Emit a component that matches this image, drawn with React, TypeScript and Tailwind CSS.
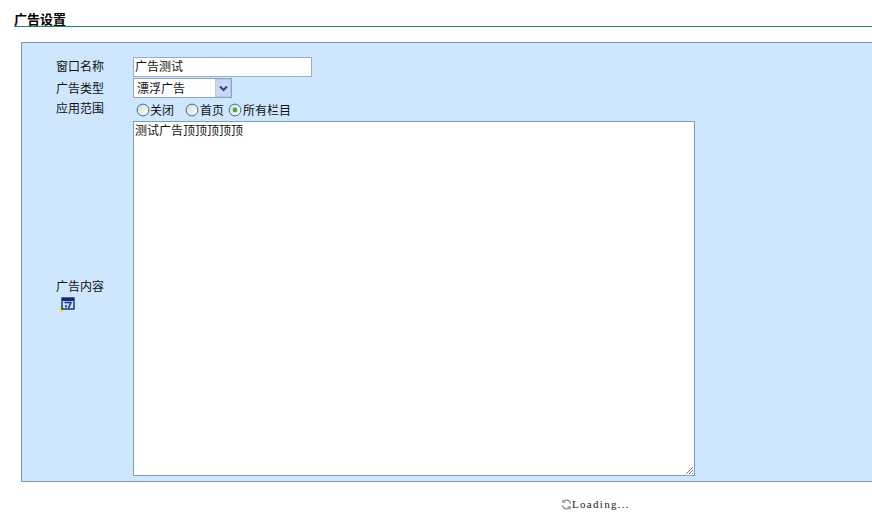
const cjk = "font-['Noto_Sans_CJK_SC','Liberation_Sans',sans-serif]";

function Radio({ checked }: { checked?: boolean }) {
  return (
    <svg width="14" height="14" viewBox="0 0 14 14" className="shrink-0">
      <defs>
        <linearGradient id="radioFill" x1="0" y1="0" x2="1" y2="1">
          <stop offset="0" stopColor="#d8d8d0" />
          <stop offset="1" stopColor="#ffffff" />
        </linearGradient>
      </defs>
      <circle cx="7" cy="7" r="5.9" fill="url(#radioFill)" stroke="#3f6f94" strokeWidth="1" />
      {checked && <circle cx="7" cy="7" r="2.4" fill="#3fae49" />}
    </svg>
  );
}

function Row({ label, children, labelClass }: { label: string; children: React.ReactNode; labelClass?: string }) {
  return (
    <div className="flex items-center">
      <div className={`w-[111px] pl-[34px] shrink-0 text-[12px] leading-[16px] text-[#111] ${labelClass ?? ""}`}>{label}</div>
      {children}
    </div>
  );
}

function FormIcon() {
  return (
    <svg width="18" height="16" viewBox="0 0 18 16">
      <path d="M0 12 L3 8 L6 11 L4 15 L1 15 Z" fill="#f2dc5e" />
      <rect x="3" y="1" width="12" height="11" fill="#cfe0f5" stroke="#14287c" strokeWidth="1.4" />
      <rect x="3" y="1" width="12" height="3" fill="#14287c" />
      <path d="M5.5 5.5 H12.5 M12 5.5 L9.5 11 M7 8 L7 10.5" stroke="#14287c" strokeWidth="1.5" fill="none" />
    </svg>
  );
}

export default function App() {
  return (
    <div className={`w-[872px] h-[523px] overflow-hidden bg-white ${cjk}`}>
      <div className="ml-[14px] mt-[11px] h-[16px] border-b border-[#2f7d6b]">
        <h1 className="text-[13px] leading-[15px] font-bold text-black">广告设置</h1>
      </div>

      <div className="ml-[21px] mt-[15px] w-[870px] h-[440px] bg-[#cfe7fe] border border-[#8096ad] pt-[14px]">
        <Row label="窗口名称" labelClass="pb-[2px]">
          <div className="w-[179px] h-[20px] bg-white border border-[#9aaebf] pl-[1px] text-[12px] leading-[16px] text-[#111]">
            广告测试
          </div>
        </Row>
        <div className="mt-[1px]">
          <Row label="广告类型">
            <div className="w-[99px] h-[20px] bg-white border border-[#8ea5bb] flex items-center justify-between text-[12px] text-[#111] pl-[3px]">
              <span className="leading-[18px]">漂浮广告</span>
              <div className="w-[16px] h-[18px] bg-[#c8d8f4] border border-[#b5c8ea] flex items-center justify-center">
                <svg width="9" height="7" viewBox="0 0 9 7">
                  <path d="M1 1.5 L4.5 5 L8 1.5" stroke="#2f4a80" strokeWidth="2" fill="none" />
                </svg>
              </div>
            </div>
          </Row>
        </div>
        <Row label="应用范围">
          <div className="flex items-center h-[20px] pl-[3px] pt-[4px] text-[12px] text-[#111]">
            <Radio />
            <span>关闭</span>
            <span className="ml-[11px]"><Radio /></span>
            <span className="ml-px">首页</span>
            <span className="ml-[4px]"><Radio checked /></span>
            <span className="ml-px">所有栏目</span>
          </div>
        </Row>
        <div className="flex items-center mt-[3px]">
          <div className="w-[111px] pl-[34px] shrink-0 text-[12px] leading-[16px] text-[#111] pb-[6px]">
            <div>广告内容</div>
            <div className="mt-[3px] ml-[3px]"><FormIcon /></div>
          </div>
          <div className="relative w-[562px] h-[355px] bg-white border border-[#7f9db9] pl-[1px] text-[12px] leading-[15px] text-[#111]">
            测试广告顶顶顶顶顶
            <svg width="10" height="10" viewBox="0 0 10 10" className="absolute right-0 bottom-0">
              <path d="M9 2 L2 9 M9 5 L5 9 M9 8 L8 9" stroke="#777" strokeWidth="1" />
            </svg>
          </div>
        </div>
      </div>

      <div className="ml-[561px] mt-[15px] flex items-center h-[14px]">
        <svg width="11" height="11" viewBox="0 0 12 12" fill="none" stroke="#8a9494" strokeWidth="1.6">
          <path d="M10.5 5 A4.5 4.5 0 0 0 2.5 3 M1.5 7 A4.5 4.5 0 0 0 9.5 9" />
          <path d="M2 0.5 V3.5 H5 M10 11.5 V8.5 H7" strokeWidth="1.2" />
        </svg>
        <span className="font-['Liberation_Serif',serif] text-[11px] tracking-[1.3px] text-[#222]">Loading...</span>
      </div>
    </div>
  );
}
